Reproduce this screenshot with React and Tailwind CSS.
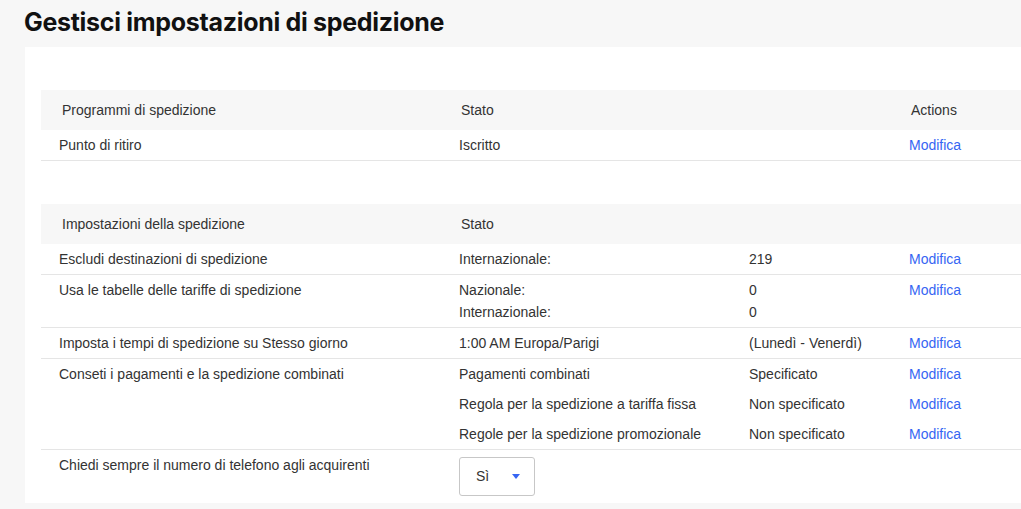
import React from 'react';

const LINK = 'text-[#3665f3]';

const Modifica = () => <a className={`${LINK} cursor-pointer`}>Modifica</a>;

const HeaderRow = ({ title, actions }) => (
  <div className="grid grid-cols-[418px_290px_160px_1fr] h-[40px] items-center bg-[#f7f7f7]">
    <div className="pl-[21px]">{title}</div>
    <div className="pl-[2px]">Stato</div>
    <div />
    <div className="pl-[2px]">{actions ? 'Actions' : ''}</div>
  </div>
);

const Row = ({ label, children, className = '' }) => (
  <div className={`grid grid-cols-[418px_1fr] border-b border-[#e5e5e5] ${className}`}>
    <div className="pl-[18px]">{label}</div>
    <div>{children}</div>
  </div>
);

const Line = ({ a, b, link, h = 'h-[22px]' }) => (
  <div className={`grid grid-cols-[290px_160px_1fr] items-center ${h}`}>
    <div>{a}</div>
    <div>{b}</div>
    <div>{link ? <Modifica /> : null}</div>
  </div>
);

export default function App() {
  return (
    <div
      className="min-h-[509px] w-[1021px] overflow-hidden bg-[#f7f7f7] text-[14px] text-[#333]"
      style={{ fontFamily: '"Liberation Sans", Arial, sans-serif' }}
    >
      <h1
        className="pl-[24px] pt-[4px] h-[47px] text-[25px] font-bold text-[#111] tracking-[-0.3px]"
        style={{ fontFamily: 'Inter, "Open Sans", sans-serif' }}
      >
        Gestisci impostazioni di spedizione
      </h1>
      <div className="ml-[25px] w-[1100px] bg-white pl-[16px] pt-[43px] pb-[7px]">
        <HeaderRow title="Programmi di spedizione" actions />
        <Row label="Punto di ritiro" className="py-[4px] leading-[22px]">
          <Line a="Iscritto" link />
        </Row>

        <div className="h-[43px]" />

        <HeaderRow title="Impostazioni della spedizione" />
        <Row label="Escludi destinazioni di spedizione" className="py-[4px] leading-[22px]">
          <Line a="Internazionale:" b="219" link />
        </Row>
        <Row label="Usa le tabelle delle tariffe di spedizione" className="py-[4px] leading-[22px]">
          <Line a="Nazionale:" b="0" link />
          <Line a="Internazionale:" b="0" />
        </Row>
        <Row label="Imposta i tempi di spedizione su Stesso giorno" className="py-[4px] leading-[22px]">
          <Line a="1:00 AM Europa/Parigi" b="(Lunedì - Venerdì)" link />
        </Row>
        <Row label="Conseti i pagamenti e la spedizione combinati" className="leading-[30px]">
          <Line a="Pagamenti combinati" b="Specificato" link h="h-[30px]" />
          <Line a="Regola per la spedizione a tariffa fissa" b="Non specificato" link h="h-[30px]" />
          <Line a="Regole per la spedizione promozionale" b="Non specificato" link h="h-[30px]" />
        </Row>
        <div className="grid grid-cols-[418px_1fr] pt-[4px]">
          <div className="pl-[18px] leading-[22px]">Chiedi sempre il numero di telefono agli acquirenti</div>
          <div className="pt-[3px]">
            <button className="flex h-[39px] w-[76px] items-center justify-between rounded-[3px] border border-[#c7c7c7] bg-white pl-[16px] pr-[14px] text-[14px] text-[#333]">
              <span>Sì</span>
              <svg width="8" height="5" viewBox="0 0 8 5">
                <path d="M0 0 H8 L4 5 Z" fill="#3665f3" />
              </svg>
            </button>
          </div>
        </div>
      </div>
    </div>
  );
}
